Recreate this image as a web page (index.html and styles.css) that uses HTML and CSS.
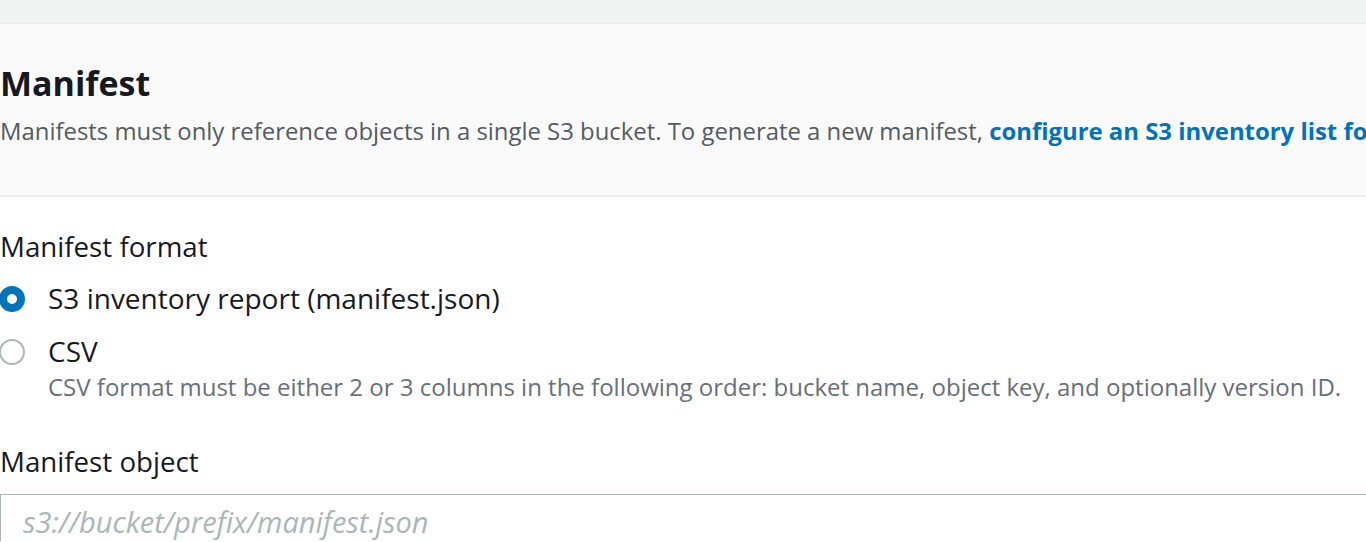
FILE: index.html
```html
<!DOCTYPE html>
<html>
<head>
<meta charset="utf-8">
<link rel="stylesheet" href="styles.css">
</head>
<body>
<div class="topband"></div>
<section class="panel-head">
  <h2 class="title">Manifest</h2>
  <p class="desc">Manifests must only reference objects in a single S3 bucket. To generate a new manifest, <a class="link" href="#">configure an S3 inventory list for your bucket</a>.</p>
</section>
<section class="panel-body">
  <div class="field">
    <div class="label">Manifest format</div>
    <div class="radios">
      <div class="radio-row">
        <span class="radio checked"></span>
        <div class="radio-text">
          <div class="radio-label">S3 inventory report (manifest.json)</div>
        </div>
      </div>
      <div class="radio-row">
        <span class="radio"></span>
        <div class="radio-text">
          <div class="radio-label">CSV</div>
          <div class="radio-desc">CSV format must be either 2 or 3 columns in the following order: bucket name, object key, and optionally version ID.</div>
        </div>
      </div>
    </div>
  </div>
  <div class="field field-object">
    <div class="label">Manifest object</div>
    <div class="input"><span class="placeholder">s3://bucket/prefix/manifest.json</span></div>
  </div>
</section>
</body>
</html>
```

FILE: styles.css
```css
html, body {
  margin: 0;
  padding: 0;
  background: #ffffff;
  overflow: hidden;
}
body {
  font-family: "Open Sans", "Noto Sans", sans-serif;
  color: #16191f;
  width: 1366px;
  height: 542px;
}
.topband {
  height: 23px;
  background: #f2f3f3;
  border-bottom: 1px solid #eaeded;
}
.panel-head {
  background: #fafafa;
  border-bottom: 2px solid #eaeded;
  padding: 36px 0 47px 0;
  white-space: nowrap;
  overflow: hidden;
}
.title {
  margin: 0;
  font-size: 34px;
  font-weight: 700;
  line-height: 46px;
  color: #16191f;
}
.desc {
  margin: 8px 0 0 0;
  font-size: 23.9px;
  line-height: 34px;
  color: #545b64;
}
.link {
  color: #0073bb;
  font-weight: 700;
  text-decoration: none;
}
.panel-body {
  padding-top: 30px;
  white-space: nowrap;
}
.label {
  font-size: 27.7px;
  line-height: 38px;
  color: #16191f;
}
.radios {
  display: flex;
  flex-direction: column;
  gap: 15px;
  margin-top: 14px;
}
.radio-row {
  display: flex;
  align-items: flex-start;
  gap: 23px;
}
.radio {
  flex: none;
  width: 26px;
  height: 26px;
  box-sizing: border-box;
  border-radius: 50%;
  border: 2px solid #aab7b8;
  background: #fff;
  margin-left: -1px;
  margin-top: 7px;
}
.radio.checked {
  border: 8px solid #0073bb;
}
.radio-label {
  font-size: 28px;
  line-height: 38px;
  color: #16191f;
}
.radio-desc {
  font-size: 24px;
  line-height: 34px;
  color: #687078;
}
.field-object {
  margin-top: 38px;
}
.input {
  margin-top: 14px;
  border: 1px solid #aab7b8;
  border-right: none;
  border-bottom: none;
  height: 47px;
  padding: 7px 22px 0 22px;
  box-sizing: border-box;
  overflow: hidden;
}
.placeholder {
  font-size: 29px;
  font-style: italic;
  color: #aab7b8;
  line-height: 40px;
}
```
